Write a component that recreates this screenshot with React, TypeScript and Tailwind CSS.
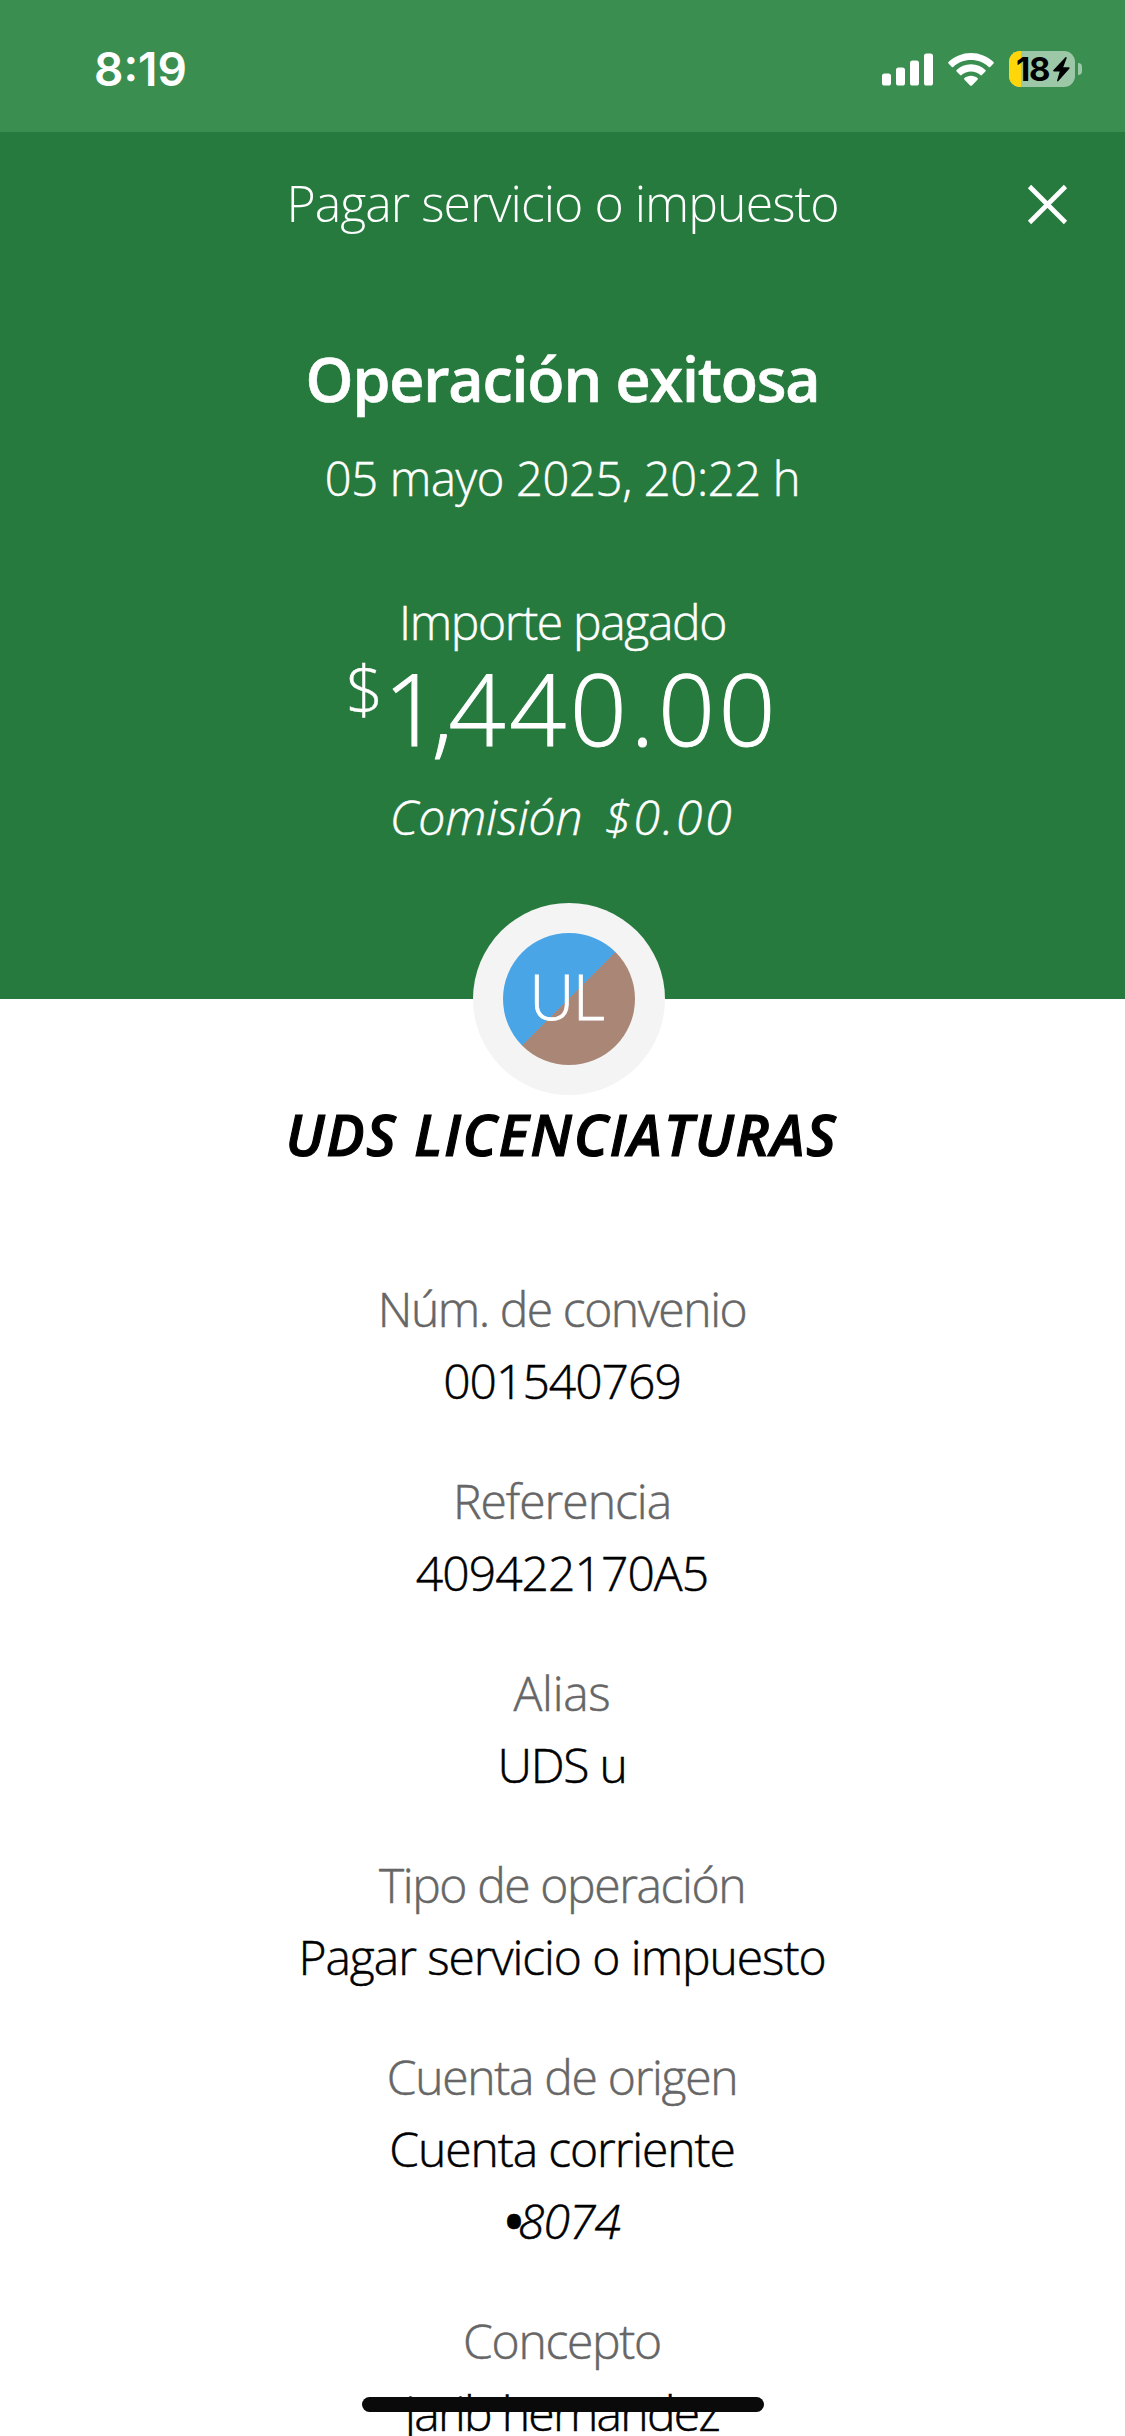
import React from 'react';

type Line = { text: string; className: string; masked?: boolean };

type Detail = {
  label: Line;
  values: Line[];
};

const details: Detail[] = [
  {
    label: { text: 'Núm. de convenio', className: 'tracking-[-1.45px]' },
    values: [{ text: '001540769', className: 'tracking-[-1px]' }],
  },
  {
    label: { text: 'Referencia', className: 'tracking-[-1px]' },
    values: [{ text: '409422170A5', className: 'tracking-[-0.95px]' }],
  },
  {
    label: { text: 'Alias', className: 'tracking-[-0.3px]' },
    values: [{ text: 'UDS u', className: 'tracking-[-1.3px]' }],
  },
  {
    label: { text: 'Tipo de operación', className: 'tracking-[-1.4px]' },
    values: [{ text: 'Pagar servicio o impuesto', className: 'tracking-[-1.05px]' }],
  },
  {
    label: { text: 'Cuenta de origen', className: 'tracking-[-1.3px]' },
    values: [
      { text: 'Cuenta corriente', className: 'tracking-[-1.1px]' },
      { text: '8074', className: 'tracking-[-0.9px] italic text-[#121212]', masked: true },
    ],
  },
  {
    label: { text: 'Concepto', className: 'tracking-[-1.3px]' },
    values: [{ text: 'jarib hernandez', className: 'tracking-[-1.7px]' }],
  },
];

const SignalIcon: React.FC = () => (
  <svg width="51" height="33" viewBox="0 0 51 33" fill="#fff">
    <rect x="0" y="20.5" width="9" height="12" rx="2.6" />
    <rect x="14" y="14.5" width="9" height="18" rx="2.6" />
    <rect x="28" y="7.5" width="9" height="25" rx="2.6" />
    <rect x="42" y="0.5" width="9" height="32" rx="2.6" />
  </svg>
);

// Three filled bands with straight radial ends
const WifiIcon: React.FC = () => (
  <svg width="46" height="33" viewBox="0 0 46 33" fill="#fff">
    <path d="M23 0C14.3 0 6.4 3.400.5 9.100c-.5.500-.5 1 0 1.500l3.300 3.300c.5.5 1 .5 1.500 0C9.900 9.600 16.100 7 23 7s13.100 2.600 17.700 6.900c.5.5 1 .5 1.500 0l3.300-3.300c.5-.5.5-1 0-1.500C39.600 3.400 31.700 0 23 0z" />
    <path d="M23 11.300c-5.600 0-10.600 2.200-14.400 5.700-.5.500-.5 1 0 1.500l3.500 3.500c.5.5 1 .5 1.500 0 2.500-2.300 5.800-3.600 9.400-3.600s6.900 1.300 9.400 3.600c.5.5 1 .5 1.500 0l3.500-3.500c.5-.5.5-1 0-1.500C33.600 13.500 28.600 11.300 23 11.300z" />
    <path d="M23 22.800c-2.500 0-4.700.9-6.500 2.300-.6.500-.5 1.100 0 1.600l5.600 5.700c.6.6 1.200.6 1.800 0l5.600-5.700c.5-.5.600-1.100 0-1.600-1.800-1.400-4-2.300-6.500-2.300z" />
  </svg>
);

const Battery: React.FC = () => (
  <div className="flex items-center gap-[3px]">
    <div className="relative h-9 w-[66px] overflow-hidden rounded-[11px] bg-[#9dc8a8]">
      <div className="h-full w-3 bg-[#ffd60a]" />
      <div className="absolute inset-0 flex items-center pl-[7px] text-black">
        <span className="font-[Inter,sans-serif] text-[33px] leading-9 font-bold tracking-[-1.2px]">18</span>
        <svg className="absolute top-[6px] left-[44px]" width="17" height="25" viewBox="0 0 17 25" fill="#000">
          <path d="M12.200.4.500 13c-.7.800-.3 1.500.5 1.500h5.700L4.100 23.400c-.3 1.100.6 1.500 1.300.7L16.300 11.800c.7-.8.3-1.500-.5-1.500h-5.600L13.600 1.200c.4-1-.7-1.600-1.400-.8z" />
        </svg>
      </div>
    </div>
    <div className="h-3 w-1 rounded-r-full bg-[#9dc8a8]" />
  </div>
);

const StatusBar: React.FC = () => (
  <div className="flex h-[132px] items-center justify-between bg-[#3a8f50] pt-1.5 pr-[43px] pl-[94px]">
    <span className="font-[Inter,sans-serif] text-[46px] leading-none font-semibold">8:19</span>
    <div className="flex items-center gap-[15px]">
      <SignalIcon />
      <WifiIcon />
      <Battery />
    </div>
  </div>
);

const App: React.FC = () => {
  return (
    <div className="relative h-[2436px] w-[1125px] overflow-hidden bg-white text-center font-['Open_Sans',sans-serif] text-[48px] leading-[72px] font-light whitespace-nowrap">
      {/* Header */}
      <header className="h-[999px] bg-[#277a3e] text-white">
        <StatusBar />
        <div className="relative h-36">
          <h1 className="text-[50px] leading-[143px] tracking-[-0.97px]">Pagar servicio o impuesto</h1>
          <button className="absolute top-[52px] right-[57px]" aria-label="Cerrar">
            <svg width="41" height="41" viewBox="0 0 41 41" stroke="#fff" strokeWidth="4.6">
              <path d="M2.500 2.500 38.500 38.500M38.500 2.500 2.500 38.500" />
            </svg>
          </button>
        </div>

        <h2 className="mt-[61px] text-[61px] leading-[84px] font-semibold tracking-[-1.2px] [-webkit-text-stroke:0.6px]">
          Operación exitosa
        </h2>
        <div className="[-webkit-text-stroke:0.5px]">
          <p className="mt-[21px] text-[47px] tracking-[-0.3px]">05 mayo 2025, 20:22 h</p>

          <p className="mt-[72px] tracking-[-1.35px]">Importe pagado</p>
          <div className="flex h-[98px] justify-center text-[100px] leading-[98px] [-webkit-text-stroke:1px]">
            <span className="text-[66px] leading-[60px] [-webkit-text-stroke:0.4px]">$</span>
            <span className="tracking-[3.6px]">
              <span className="tracking-[-9px]">1</span>
              <span className="tracking-[-4.5px]">,</span>
              440.00
            </span>
          </div>
          <div className="mt-[25px] flex justify-center gap-[22px] pr-px italic">
            <span>Comisión</span>
            <span className="tracking-[2.6px]">$0.00</span>
          </div>
        </div>
      </header>

      {/* Payee */}
      <main>
        <div className="relative -mt-24 ml-[473px] flex size-48 items-center justify-center rounded-full bg-[#f4f4f4]">
          <div className="flex size-[132px] justify-center rounded-full bg-linear-135 from-[#49a5e6] from-50% to-[#a98676] to-50% pr-[5px] text-[62px] leading-[126px] tracking-[-1.2px] text-white [-webkit-text-stroke:0.8px]">
            UL
          </div>
        </div>
        <h3 className="pr-[2px] text-[57px] leading-[78px] font-semibold tracking-[1.7px] text-black italic [-webkit-text-stroke:1.1px]">
          UDS LICENCIATURAS
        </h3>

        {/* Operation details */}
        <dl className="mt-[100px] flex flex-col gap-12 pr-px [-webkit-text-stroke:0.5px]">
          {details.map(({ label, values }) => (
            <div key={label.text}>
              <dt className={`text-[#666] ${label.className}`}>{label.text}</dt>
              {values.map((value) => (
                <dd key={value.text} className={`text-black ${value.className}`}>
                  {value.masked && <span className="font-bold tracking-[-4px]">•</span>}
                  {value.text}
                </dd>
              ))}
            </div>
          ))}
        </dl>
      </main>

      {/* Home indicator */}
      <div className="absolute bottom-6 left-[362px] h-[15px] w-[402px] rounded-full bg-[#0a0a0a]" />
    </div>
  );
};

export default App;
